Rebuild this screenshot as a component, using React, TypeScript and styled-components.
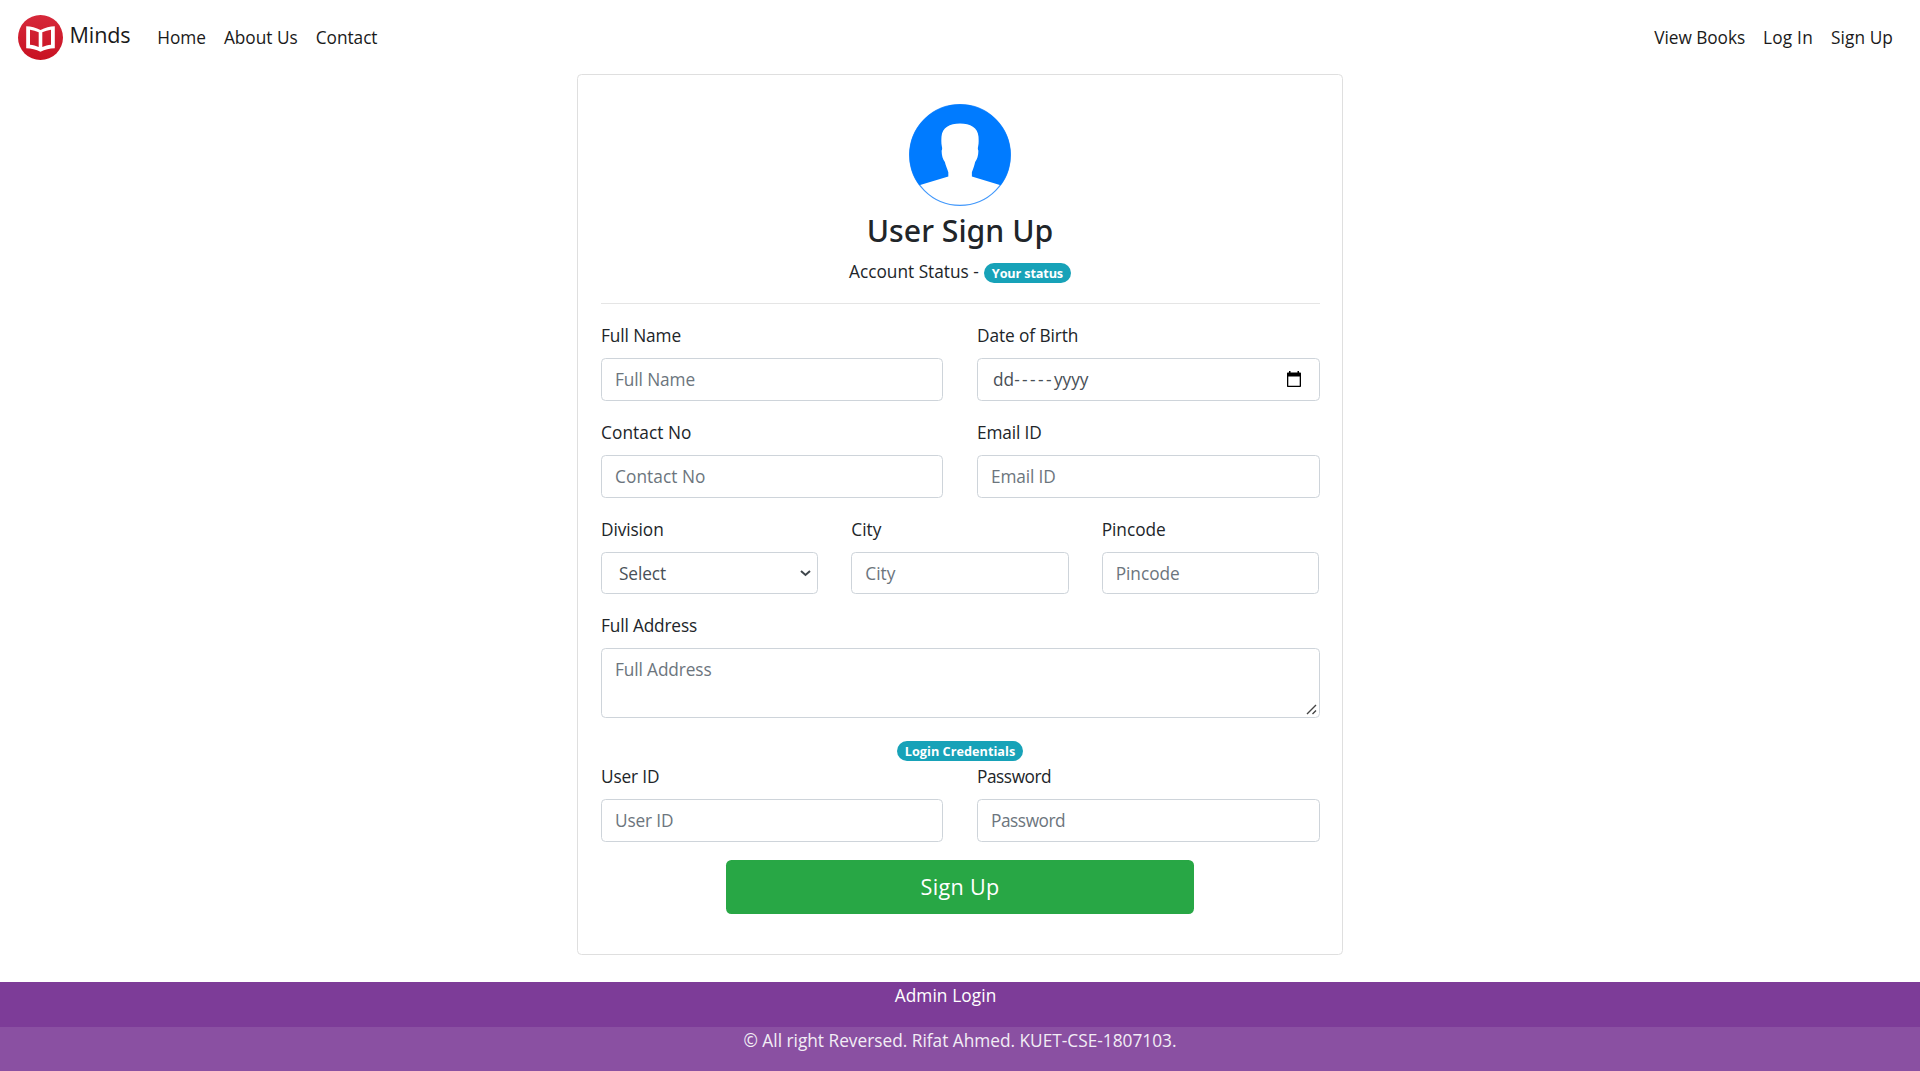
import React from 'react';
import styled, { createGlobalStyle } from 'styled-components';

const GlobalStyle = createGlobalStyle`
  *, *::before, *::after { box-sizing: border-box; }
  body {
    margin: 0;
    background: #fff;
    color: #212529;
    font-family: 'Open Sans', 'Noto Sans', sans-serif;
    font-size: 17.28px;
    line-height: 27px;
  }
`;

interface Tracked { $track?: number }

const Text = styled.span<Tracked>`
  letter-spacing: ${({ $track = 0 }) => $track}px;
  white-space: nowrap;
`;

const Page = styled.div`
  display: flex;
  flex-direction: column;
  height: 1071px;
  overflow: hidden;
`;

const Navbar = styled.nav`
  display: flex;
  align-items: center;
  flex: none;
  height: 74px;
  padding: 0 27px 0 18px;
`;

const Brand = styled.a`
  display: flex;
  align-items: center;
  gap: 6.6px;
  width: 139.2px;
  font-size: 21.6px;
  line-height: 34px;
  color: #1a1a1a;
  ${Text} { margin-top: -5px; }
`;

const NavList = styled.div<{ $end?: boolean }>`
  display: flex;
  gap: 18px;
  margin-left: ${({ $end }) => ($end ? 'auto' : '0')};
`;

const NavLink = styled.a<Tracked>`
  color: #1a1a1a;
  letter-spacing: ${({ $track = 0 }) => $track}px;
  white-space: nowrap;
`;

const Card = styled.main`
  display: flex;
  flex-direction: column;
  flex: none;
  width: 766px;
  height: 881px;
  margin: 0 auto;
  padding: 23px 22px 0 23px;
  border: 1px solid #dfdfdf;
  border-radius: 4.5px;
`;

const Head = styled.header`
  display: flex;
  flex-direction: column;
  align-items: center;
  height: 206px;
  padding: 6px 1px 0 0;
  border-bottom: 1px solid #e5e5e5;
  margin-bottom: 18px;
`;

const Title = styled.h3`
  margin: 6px 0 9px;
  font-family: 'Noto Sans', 'Open Sans', sans-serif;
  font-size: 30.24px;
  font-weight: 500;
  line-height: 38px;
`;

const Status = styled.div`
  display: flex;
  align-items: center;
  gap: 5px;
  ${Text} { margin: -1px 0 1px; }
`;

const Badge = styled.span<Tracked>`
  display: flex;
  align-items: center;
  height: 20px;
  padding: 0 8px;
  border-radius: 10px;
  background: #17a2b8;
  color: #fff;
  font-size: 12.7px;
  font-weight: 700;
  line-height: 20px;
  letter-spacing: ${({ $track = 0 }) => $track}px;
  white-space: nowrap;
`;

const columns: Record<number, string> = {
  1: '1fr',
  2: '342px 343px',
  3: 'repeat(3, 1fr)',
};

const Row = styled.div<{ $cols: number }>`
  display: grid;
  grid-template-columns: ${({ $cols }) => columns[$cols]};
  column-gap: ${({ $cols }) => ($cols === 3 ? 33 : 34)}px;
  padding-right: ${({ $cols }) => ($cols === 3 ? 1 : 0)}px;
  margin-bottom: 18px;
`;

const Group = styled.label`
  display: flex;
  flex-direction: column;
  gap: 9px;
  min-width: 0;
`;

const controlBox = `
  width: 100%;
  border: 1px solid #ced4da;
  border-radius: 4.5px;
  background: #fff;
  color: #495057;
`;

const Input = styled.input<Tracked & { $h?: number }>`
  ${controlBox}
  height: ${({ $h = 43 }) => $h}px;
  padding: 0 13px;
  font: inherit;
  letter-spacing: ${({ $track = 0 }) => $track}px;
  outline: none;
  &::placeholder { color: #6c757d; opacity: 1; }
`;

const Picker = styled.div<{ $h?: number; $pad: string }>`
  ${controlBox}
  display: flex;
  align-items: center;
  justify-content: space-between;
  height: ${({ $h = 43 }) => $h}px;
  padding: ${({ $pad }) => $pad};
`;

const DateParts = styled.span`
  display: flex;
`;

const AreaWrap = styled.div`
  position: relative;
  height: 70px;
`;

const Area = styled.textarea<Tracked>`
  ${controlBox}
  display: block;
  height: 70px;
  padding: 7px 13px;
  font: inherit;
  letter-spacing: ${({ $track = 0 }) => $track}px;
  resize: none;
  outline: none;
  &::placeholder { color: #6c757d; opacity: 1; }
`;

const Grip = styled.svg`
  position: absolute;
  right: 3px;
  bottom: 3px;
`;

const BadgeLine = styled.div`
  display: flex;
  justify-content: center;
  height: 27px;
  padding: 5px 1px 0 0;
`;

const Submit = styled.button`
  align-self: center;
  width: 468px;
  height: 54px;
  margin-right: 1px;
  padding: 0 0 1px;
  border: 0;
  border-radius: 5.4px;
  background: #28a745;
  color: #fff;
  font-family: inherit;
  font-size: 21.6px;
  line-height: 34px;
  letter-spacing: 0.3px;
`;

const Footer = styled.footer`
  flex: none;
  margin-top: 27px;
  text-align: center;
`;

const FooterBar = styled.div<{ $bg: string; $color: string; $shift?: number }>`
  height: 45px;
  padding-right: ${({ $shift = 0 }) => $shift}px;
  background: ${({ $bg }) => $bg};
  color: ${({ $color }) => $color};
`;

const BookLogo = () => (
  <svg width="45" height="45" viewBox="0 0 45 45">
    <defs>
      <linearGradient id="disc" x1="0" y1="0" x2="0" y2="1">
        <stop offset="0" stopColor="#d6283a" />
        <stop offset="1" stopColor="#c81222" />
      </linearGradient>
    </defs>
    <circle cx="22.5" cy="22.5" r="22.5" fill="url(#disc)" />
    <path
      fill="#fff"
      fillRule="evenodd"
      d="M8.2 11.2C13 11.4 18 12.6 22.5 15C27 12.6 32 11.4 36.8 11.2V33.2C31.5 33.3 27 34.4 22.5 36.8C18 34.4 13.5 33.3 8.2 33.2ZM12 14.7V29.7C15 30 18 30.7 20.7 31.9V17.3C18 16 15 15.1 12 14.7ZM33 14.7C30 15.1 27 16 24.3 17.3V31.9C27 30.7 30 30 33 29.7Z"
    />
  </svg>
);

const Avatar = () => (
  <svg width="102" height="102" viewBox="0 0 103 103">
    <circle cx="51.5" cy="51.5" r="50.8" fill="#fff" stroke="#4298fb" strokeWidth="1.2" />
    <path
      fill="#007bff"
      d="M10.4 82A51.2 51.2 0 1 1 92.6 82L63.5 73.3V69C65 65 66 62 66.8 58.5C69 55.5 70.2 51 70 47C69.3 45.5 69.5 44.5 69.8 43C70.5 40 70.4 37 70.2 33C69.5 24 62 19.8 51.5 19.8C41 19.8 33.5 24 32.8 33C32.6 37 32.5 40 33.2 43C33.5 44.5 33.7 45.5 33 47C32.8 51 34 55.5 36.2 58.5C37 62 38.5 65 39.7 69V73.3Z"
    />
  </svg>
);

const CalendarIcon = () => (
  <svg width="14" height="17" viewBox="0 0 14 17">
    <path
      fill="#000"
      fillRule="evenodd"
      d="M2 0H3.5V1.5H10.5V0H12V1.5H13C13.6 1.5 14 1.9 14 2.5V15C14 15.6 13.6 16 13 16H1C.4 16 0 15.6 0 15V2.5C0 1.9.4 1.5 1 1.5H2ZM1.3 5.5V14.7H12.7V5.5Z"
    />
  </svg>
);

const Chevron = () => (
  <svg width="11" height="7" viewBox="0 0 11 7">
    <path d="M1 1L5.5 5L10 1" fill="none" stroke="#3f464c" strokeWidth="2" />
  </svg>
);

interface FieldProps { label: string; track?: number; h?: number; type?: string }

const Field = ({ label, track = 0, h, type = 'text' }: FieldProps) => (
  <Group>
    <Text $track={track}>{label}</Text>
    <Input $track={track} $h={h} type={type} placeholder={label} />
  </Group>
);

export default function App() {
  return (
    <Page>
      <GlobalStyle />
      <Navbar>
        <Brand>
          <BookLogo />
          <Text $track={-0.16}>Minds</Text>
        </Brand>
        <NavList>
          <NavLink $track={-0.03}>Home</NavLink>
          <NavLink>About Us</NavLink>
          <NavLink $track={-0.05}>Contact</NavLink>
        </NavList>
        <NavList $end>
          <NavLink $track={-0.07}>View Books</NavLink>
          <NavLink $track={0.2}>Log In</NavLink>
          <NavLink $track={0.09}>Sign Up</NavLink>
        </NavList>
      </Navbar>

      <Card>
        <Head>
          <Avatar />
          <Title>User Sign Up</Title>
          <Status>
            <Text>Account Status -</Text>
            <Badge $track={-0.15}>Your status</Badge>
          </Status>
        </Head>

        <Row $cols={2}>
          <Field label="Full Name" track={-0.1} />
          <Group>
            <Text $track={-0.09}>Date of Birth</Text>
            <Picker $pad="0 18px 0 15px">
              <DateParts>
                <Text>dd</Text>
                <Text $track={2.4}>-----</Text>
                <Text>yyyy</Text>
              </DateParts>
              <CalendarIcon />
            </Picker>
          </Group>
        </Row>
        <Row $cols={2}>
          <Field label="Contact No" track={0.06} />
          <Field label="Email ID" track={-0.13} />
        </Row>
        <Row $cols={3}>
          <Group>
            <Text $track={-0.1}>Division</Text>
            <Picker $h={42} $pad="0 6px 0 17px">
              <Text $track={-0.1}>Select</Text>
              <Chevron />
            </Picker>
          </Group>
          <Field label="City" track={-0.03} h={42} />
          <Field label="Pincode" track={-0.02} h={42} />
        </Row>
        <Row $cols={1}>
          <Group>
            <Text $track={-0.16}>Full Address</Text>
            <AreaWrap>
              <Area $track={-0.12} placeholder="Full Address" />
              <Grip width="11" height="11" viewBox="0 0 11 11">
                <path d="M1 10L10 1M6.5 10L10 6.5" stroke="#444" strokeWidth="1.4" fill="none" />
              </Grip>
            </AreaWrap>
          </Group>
        </Row>
        <BadgeLine>
          <Badge $track={0.02}>Login Credentials</Badge>
        </BadgeLine>
        <Row $cols={2}>
          <Field label="User ID" track={-0.15} />
          <Field label="Password" track={-0.45} type="password" />
        </Row>
        <Submit>Sign Up</Submit>
      </Card>

      <Footer>
        <FooterBar $bg="#7d3c98" $color="#fff" $shift={29}>
          <Text $track={0.1}>Admin Login</Text>
        </FooterBar>
        <FooterBar $bg="#8a50a2" $color="#f2edf5">
          <Text>© All right Reversed. Rifat Ahmed. KUET-CSE-1807103.</Text>
        </FooterBar>
      </Footer>
    </Page>
  );
}
